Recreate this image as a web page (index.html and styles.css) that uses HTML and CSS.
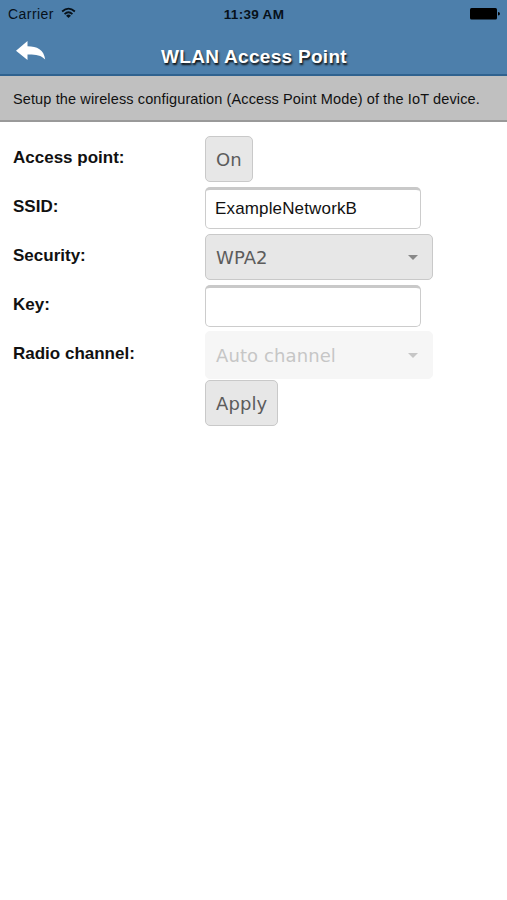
FILE: index.html
```html
<!DOCTYPE html>
<html lang="en">
<head>
<meta charset="utf-8">
<title>WLAN Access Point</title>
<link rel="stylesheet" href="styles.css">
</head>
<body>
<header class="top">
  <div class="status">
    <div class="carrier"><span>Carrier</span>
      <svg class="wifi" width="15" height="12" viewBox="0 0 16 12"><g fill="none" stroke="#07111a" stroke-width="1.9"><path d="M1.2 4.4Q8-1.8 14.8 4.4"/><path d="M3.8 7.2Q8 3.2 12.2 7.2"/></g><path d="M5.4 8.8Q8 6.5 10.6 8.8L8 11.4Z" fill="#07111a"/></svg>
    </div>
    <div class="time">11:39 AM</div>
    <svg class="battery" width="30" height="12" viewBox="0 0 30 12"><rect width="27" height="11.5" rx="1.5"/><path d="M28 4q2 .3 2 1.8T28 7.6Z"/></svg>
  </div>
  <div class="nav">
    <svg class="back" width="30" height="20" viewBox="0 0 30 20"><path d="M0 9.7 11.5 0V5.2C21 5.2 28 8.5 29.2 18.6 25 13.7 19 13.3 11.5 13.4V19Z" fill="#fff"/></svg>
    <h1 class="title">WLAN Access Point</h1>
  </div>
</header>
<p class="intro"><span>Setup the wireless configuration (Access Point Mode) of the IoT device.</span></p>
<main class="form">
  <div class="row"><div class="label"><span>Access point:</span></div><div class="button on"><span>On</span></div></div>
  <div class="row"><div class="label"><span>SSID:</span></div><div class="field"><span>ExampleNetworkB</span></div></div>
  <div class="row"><div class="label"><span>Security:</span></div><div class="button select"><span>WPA2</span><i class="caret"></i></div></div>
  <div class="row"><div class="label"><span>Key:</span></div><div class="field"></div></div>
  <div class="row"><div class="label"><span>Radio channel:</span></div><div class="button select disabled"><span>Auto channel</span><i class="caret"></i></div></div>
  <div class="row"><div class="label"></div><div class="button apply"><span>Apply</span></div></div>
</main>
</body>
</html>
```
FILE: styles.css
```css
* { box-sizing: border-box; }
body { margin: 0; background: #fff; color: #111; font-family: "Liberation Sans", Arial, sans-serif; }
.top { height: 76px; background: #4d7fab; border-bottom: 2px solid #2f628f; }
.status { height: 28px; display: grid; grid-template-columns: 1fr auto 1fr; align-items: center; padding: 0 7px 0 8px; font-size: 14px; color: #07111a; }
.carrier { display: flex; align-items: center; gap: 7px; letter-spacing: .45px; }
.wifi { margin-top: -2px; }
.time { font-weight: bold; font-size: 13.5px; letter-spacing: .3px; }
.battery { justify-self: end; margin-top: -1px; fill: #000; }
.nav { height: 48px; display: grid; grid-template-columns: 60px 1fr 60px; }
.back { margin: 13px 0 0 16px; }
.title { margin: 18px 0 0 1px; text-align: center; color: #fff; font-size: 19px; line-height: 22px; letter-spacing: .3px; text-shadow: 1px 2px 2px #111; white-space: nowrap; }
.intro { margin: 0; height: 46px; padding: 0 13px; background: #c0c0c0; border-bottom: 2px solid #999; font-size: 14.5px; letter-spacing: .12px; line-height: 46px; white-space: nowrap; }
.form { padding: 13px 13px 0; }
.row { height: 48.8px; display: grid; grid-template-columns: 192px 1fr; align-items: center; }
.label { font-weight: bold; font-size: 17px; margin-top: -2px; }
.button { height: 46px; width: 228px; display: flex; align-items: center; padding: 1px 10px 0; background: #e7e7e7; border: 1px solid #c9c9c9; border-radius: 5px; color: #5c5c5c; font-family: "DejaVu Sans", Verdana, sans-serif; font-size: 18px; letter-spacing: .1px; white-space: nowrap; }
.on { width: 48px; }
.apply { width: 73px; }
.select { justify-content: space-between; padding-right: 14px; }
.caret { border: 5px solid transparent; border-top-color: #888; border-bottom: 0; }
.disabled { height: 48px; background: #f6f6f6; border-color: #f6f6f6; color: #c6c6c6; }
.disabled .caret { border-top-color: #c6c6c6; }
.field { width: 216px; height: 42px; border: 1px solid #ccc; border-top: 3px solid #c9c9c9; border-radius: 5px; padding: 0 9px; font-size: 17px; letter-spacing: .15px; line-height: 37px; background: #fff; }
```
